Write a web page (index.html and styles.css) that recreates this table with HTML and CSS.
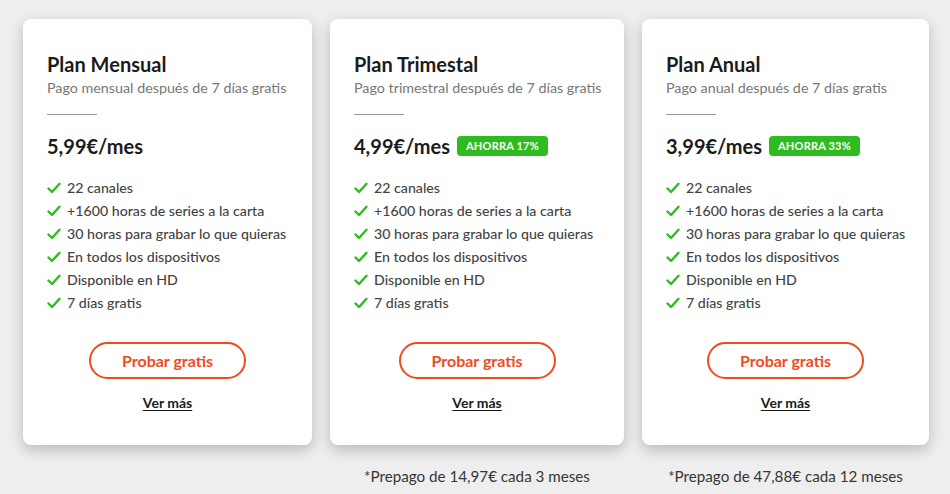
FILE: index.html
```html
<!DOCTYPE html>
<html lang="es">
<head>
<meta charset="utf-8">
<link rel="stylesheet" href="styles.css">
</head>
<body>
<main class="plans">
  <section class="card">
    <h2 class="title">Plan Mensual</h2>
    <p class="sub">Pago mensual después de 7 días gratis</p>
    <hr class="rule">
    <div class="price-row"><span class="price">5,99€/mes</span></div>
    <ul class="features">
      <li><svg class="check" viewBox="0 0 14 12"><path d="M1.5 6.5 L5 10 L12.5 1.8"/></svg>22 canales</li>
      <li><svg class="check" viewBox="0 0 14 12"><path d="M1.5 6.5 L5 10 L12.5 1.8"/></svg>+1600 horas de series a la carta</li>
      <li><svg class="check" viewBox="0 0 14 12"><path d="M1.5 6.5 L5 10 L12.5 1.8"/></svg>30 horas para grabar lo que quieras</li>
      <li><svg class="check" viewBox="0 0 14 12"><path d="M1.5 6.5 L5 10 L12.5 1.8"/></svg>En todos los dispositivos</li>
      <li><svg class="check" viewBox="0 0 14 12"><path d="M1.5 6.5 L5 10 L12.5 1.8"/></svg>Disponible en HD</li>
      <li><svg class="check" viewBox="0 0 14 12"><path d="M1.5 6.5 L5 10 L12.5 1.8"/></svg>7 días gratis</li>
    </ul>
    <div class="actions">
      <a class="btn" href="#">Probar gratis</a>
      <a class="more" href="#">Ver más</a>
    </div>
  </section>
  <section class="card">
    <h2 class="title">Plan Trimestal</h2>
    <p class="sub">Pago trimestral después de 7 días gratis</p>
    <hr class="rule">
    <div class="price-row"><span class="price">4,99€/mes</span><span class="badge">AHORRA 17%</span></div>
    <ul class="features">
      <li><svg class="check" viewBox="0 0 14 12"><path d="M1.5 6.5 L5 10 L12.5 1.8"/></svg>22 canales</li>
      <li><svg class="check" viewBox="0 0 14 12"><path d="M1.5 6.5 L5 10 L12.5 1.8"/></svg>+1600 horas de series a la carta</li>
      <li><svg class="check" viewBox="0 0 14 12"><path d="M1.5 6.5 L5 10 L12.5 1.8"/></svg>30 horas para grabar lo que quieras</li>
      <li><svg class="check" viewBox="0 0 14 12"><path d="M1.5 6.5 L5 10 L12.5 1.8"/></svg>En todos los dispositivos</li>
      <li><svg class="check" viewBox="0 0 14 12"><path d="M1.5 6.5 L5 10 L12.5 1.8"/></svg>Disponible en HD</li>
      <li><svg class="check" viewBox="0 0 14 12"><path d="M1.5 6.5 L5 10 L12.5 1.8"/></svg>7 días gratis</li>
    </ul>
    <div class="actions">
      <a class="btn" href="#">Probar gratis</a>
      <a class="more" href="#">Ver más</a>
    </div>
  </section>
  <section class="card">
    <h2 class="title">Plan Anual</h2>
    <p class="sub">Pago anual después de 7 días gratis</p>
    <hr class="rule">
    <div class="price-row"><span class="price">3,99€/mes</span><span class="badge">AHORRA 33%</span></div>
    <ul class="features">
      <li><svg class="check" viewBox="0 0 14 12"><path d="M1.5 6.5 L5 10 L12.5 1.8"/></svg>22 canales</li>
      <li><svg class="check" viewBox="0 0 14 12"><path d="M1.5 6.5 L5 10 L12.5 1.8"/></svg>+1600 horas de series a la carta</li>
      <li><svg class="check" viewBox="0 0 14 12"><path d="M1.5 6.5 L5 10 L12.5 1.8"/></svg>30 horas para grabar lo que quieras</li>
      <li><svg class="check" viewBox="0 0 14 12"><path d="M1.5 6.5 L5 10 L12.5 1.8"/></svg>En todos los dispositivos</li>
      <li><svg class="check" viewBox="0 0 14 12"><path d="M1.5 6.5 L5 10 L12.5 1.8"/></svg>Disponible en HD</li>
      <li><svg class="check" viewBox="0 0 14 12"><path d="M1.5 6.5 L5 10 L12.5 1.8"/></svg>7 días gratis</li>
    </ul>
    <div class="actions">
      <a class="btn" href="#">Probar gratis</a>
      <a class="more" href="#">Ver más</a>
    </div>
  </section>
  <p class="note"></p>
  <p class="note">*Prepago de 14,97€ cada 3 meses</p>
  <p class="note">*Prepago de 47,88€ cada 12 meses</p>
</main>
</body>
</html>
```
FILE: styles.css
```css
* { box-sizing: border-box; }
html, body { margin: 0; padding: 0; }
body {
  background: #eeeeee;
  font-family: "Lato", "Inter", sans-serif;
  color: #222;
  width: 950px;
  height: 494px;
  overflow: hidden;
}
.plans {
  display: grid;
  grid-template-columns: 289px 294px 287px;
  column-gap: 18px;
  padding: 19px 21px 0 23px;
}
.card {
  background: #fff;
  border-radius: 8px;
  height: 426px;
  padding: 33px 0 0 24px;
  box-shadow: 0 5px 14px rgba(0,0,0,0.22);
  display: flex;
  flex-direction: column;
}
.title {
  margin: 0;
  font-size: 20px;
  line-height: 24px;
  font-weight: 700;
  color: #1b1b1b;
}
.sub {
  margin: 2px 0 0;
  font-size: 14.3px;
  line-height: 20px;
  color: #777;
}
.rule {
  margin: 16px 0 0;
  width: 50px;
  border: 0;
  border-top: 1px solid #9a9a9a;
  height: 0;
}
.price-row {
  display: flex;
  align-items: center;
  gap: 7px;
  margin-top: 19px;
  height: 24px;
}
.price {
  font-size: 20px;
  font-weight: 700;
  color: #1b1b1b;
}
.badge {
  background: #2dbb1f;
  color: #fff;
  font-size: 11px;
  font-weight: 700;
  border-radius: 4px;
  height: 20px;
  line-height: 20px;
  padding: 0 9px;
  letter-spacing: 0.2px;
}
.features {
  list-style: none;
  margin: 18px 0 0;
  padding: 0;
}
.features li {
  display: flex;
  align-items: center;
  height: 23px;
  font-size: 14.2px;
  color: #444;
  font-weight: 500;
}
.check {
  width: 14px;
  height: 12px;
  margin-right: 6px;
  fill: none;
  stroke: #2dbb1f;
  stroke-width: 2.4;
  stroke-linecap: round;
  stroke-linejoin: round;
}
.actions {
  display: flex;
  flex-direction: column;
  align-items: center;
  margin: 28px 24px 0 0;
}
.btn {
  width: 157px;
  height: 37px;
  border: 2px solid #f04b1f;
  border-radius: 19px;
  color: #f04b1f;
  font-size: 16px;
  font-weight: 700;
  text-decoration: none;
  display: flex;
  align-items: center;
  justify-content: center;
}
.more {
  margin-top: 15px;
  font-size: 14px;
  font-weight: 700;
  color: #1b1b1b;
  text-decoration: underline;
  text-underline-offset: 2px;
}
.note {
  margin: 22px 0 0;
  text-align: center;
  font-size: 15.2px;
  color: #363636;
}
```
